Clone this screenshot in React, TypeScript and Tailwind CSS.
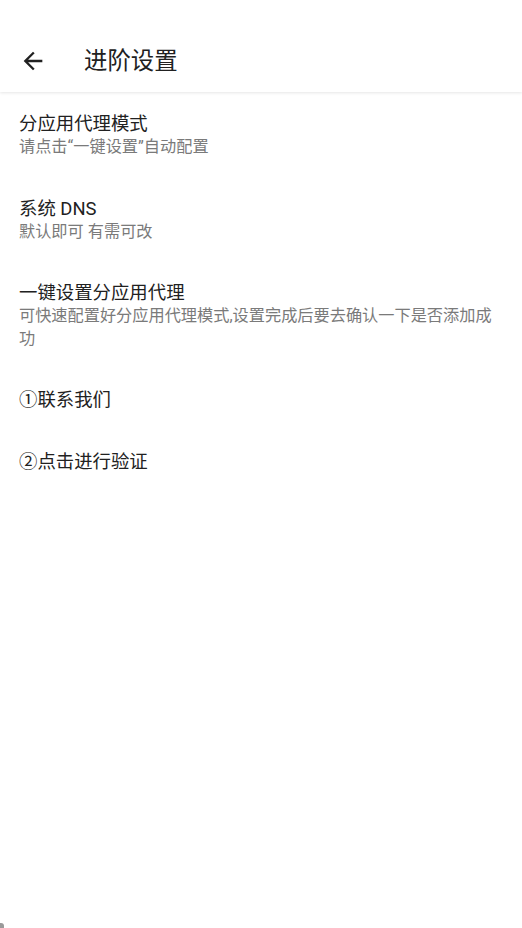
import React from 'react';

type SettingItem = {
  title: string;
  summary?: string;
};

const items: SettingItem[] = [
  { title: '分应用代理模式', summary: '请点击“一键设置”自动配置' },
  { title: '系统 DNS', summary: '默认即可 有需可改' },
  {
    title: '一键设置分应用代理',
    summary: '可快速配置好分应用代理模式,设置完成后要去确认一下是否添加成功'
  },
  { title: '①联系我们' },
  { title: '②点击进行验证' }
];

const fontStack = "font-['Roboto','Noto_Sans_CJK_SC',sans-serif]";

function BackArrow() {
  return (
    <svg viewBox="0 0 24 24" className="h-[28px] w-[28px]" fill="#212121">
      <path d="M20 11H7.83l5.59-5.59L12 4l-8 8 8 8 1.41-1.41L7.83 13H20v-2z" />
    </svg>
  );
}

function Toolbar() {
  return (
    <header className="relative z-10 flex h-[92px] items-center bg-white pt-[30px] shadow-[0_1px_3px_rgba(0,0,0,0.10)]">
      <button type="button" className="ml-[19px] flex h-[28px] w-[28px] items-center justify-center">
        <BackArrow />
      </button>
      <h1 className="ml-[37px] text-[23.4px] leading-[28px] text-[#212121]">进阶设置</h1>
    </header>
  );
}

function SettingRow({ title, summary }: SettingItem) {
  return (
    <div className="pl-[19px] pr-[19px] pt-[20px] pb-[18px]">
      <p className="text-[18.4px] leading-[24px] text-[#212121]">{title}</p>
      {summary && (
        <p className="text-[16.2px] leading-[22.5px] text-[#7a7a7a]">{summary}</p>
      )}
    </div>
  );
}

export default function App() {
  return (
    <div className={`relative min-h-[928px] w-full bg-white ${fontStack}`}>
      <Toolbar />
      <div className="flex flex-col">
        {items.map((item) => (
          <SettingRow key={item.title} title={item.title} summary={item.summary} />
        ))}
      </div>
      {/* faint corner mark seen at the bottom-left of the capture */}
      <span className="absolute bottom-0 left-0 h-[5px] w-[4px] rounded-tr-[3px] bg-[#9a9a9a]" />
    </div>
  );
}
